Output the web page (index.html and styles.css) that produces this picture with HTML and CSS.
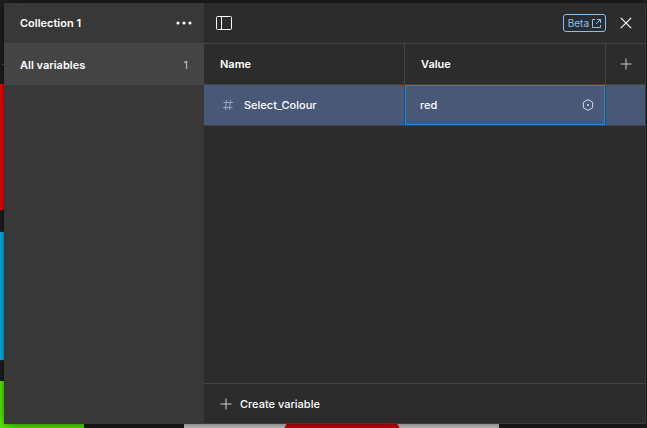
FILE: index.html
```html
<!DOCTYPE html>
<html lang="en">
<head>
<meta charset="utf-8">
<title>Variables</title>
<link rel="stylesheet" href="styles.css">
</head>
<body>
<div class="canvas" aria-hidden="true">
  <span class="shape shape-line"></span>
  <span class="shape shape-red"></span>
  <span class="shape shape-blue"></span>
  <span class="shape shape-green"></span>
  <span class="shape shape-frame"></span>
  <span class="shape shape-button"></span>
</div>
<section class="dialog">
  <aside class="sidebar">
    <header class="collection">
      <button class="collection-name" type="button">Collection 1</button>
      <button class="icon-button" type="button" aria-label="Collection options">
        <svg width="16" height="4" viewBox="0 0 16 4" fill="#fff"><circle cx="2" cy="2" r="1.6"/><circle cx="8" cy="2" r="1.6"/><circle cx="14" cy="2" r="1.6"/></svg>
      </button>
    </header>
    <a class="group" href="#all"><span>All variables</span><span class="count">1</span></a>
  </aside>
  <main class="panel">
    <header class="toolbar">
      <button class="icon-button" type="button" aria-label="Toggle sidebar">
        <svg width="16" height="14" viewBox="0 0 16 14" fill="none" stroke="#fff"><rect x=".5" y=".5" width="15" height="13" rx="1"/><path d="M5.500 1v12"/></svg>
      </button>
      <div class="actions">
        <a class="beta" href="#beta">Beta
          <svg width="9" height="9" viewBox="0 0 9 9" fill="none" stroke="currentColor"><path d="M3 .5H.5v8h8V6M5 .5h3.500V4M8.500 .5 4 5"/></svg>
        </a>
        <button class="icon-button" type="button" aria-label="Close">
          <svg width="12" height="12" viewBox="0 0 12 12" fill="none" stroke="#fff" stroke-width="1.100"><path d="m.8.8 10.400 10.400M11.200.8.8 11.200"/></svg>
        </button>
      </div>
    </header>
    <table class="variables">
      <colgroup><col><col><col class="col-add"></colgroup>
      <thead>
        <tr>
          <th scope="col">Name</th>
          <th scope="col">Value</th>
          <th class="add">
            <button class="icon-button" type="button" aria-label="Add mode">
              <svg width="12" height="12" viewBox="0 0 12 12" fill="none" stroke="#c8c8c8"><path d="M6 .5v11M.5 6h11"/></svg>
            </button>
          </th>
        </tr>
      </thead>
      <tbody>
        <tr>
          <td>
            <div class="name">
              <svg width="10" height="10" viewBox="0 0 10 10" fill="none" stroke="#9ba4b8"><path d="M3.500 0 2.500 10M7.500 0l-1 10M.5 2.500H10M0 7.500h9.500"/></svg>
              <span>Select_Colour</span>
            </div>
          </td>
          <td class="value-cell">
            <div class="value">
              <input type="text" value="red" aria-label="Value of Select_Colour">
              <button class="icon-button" type="button" aria-label="Link variable">
                <svg width="12" height="12" viewBox="0 0 12 12" fill="none" stroke="#d5d9e2"><path d="M6 .6 10.600 3.200v5.600L6 11.400 1.400 8.800V3.200z" stroke-linejoin="round"/><circle cx="6" cy="6" r="1" fill="#e5e8ee" stroke="none"/></svg>
              </button>
            </div>
          </td>
          <td></td>
        </tr>
      </tbody>
    </table>
    <footer class="footer">
      <button class="create" type="button">
        <svg width="12" height="12" viewBox="0 0 12 12" fill="none" stroke="#d0d0d0"><path d="M6 .5v11M.5 6h11"/></svg>
        Create variable
      </button>
    </footer>
  </main>
</section>
</body>
</html>
```
FILE: styles.css
```css
* {
  box-sizing: border-box;
}

body {
  margin: 0;
  min-height: 100vh;
  padding: 3px 1px 4px 4px;
  display: flex;
  overflow: hidden;
  background: #1e1e1e;
  color: #fff;
  font: 500 11px/16px Inter, "Liberation Sans", sans-serif;
}

button,
input {
  margin: 0;
  padding: 0;
  border: 0;
  background: none;
  color: inherit;
  font: inherit;
}

a {
  color: inherit;
  text-decoration: none;
}

svg {
  display: block;
  flex: none;
}

.icon-button {
  display: flex;
}

.canvas {
  position: absolute;
  inset: 0;
  overflow: hidden;
}

.shape {
  position: absolute;
}

.shape-line {
  left: 2px;
  top: 64px;
  width: 20px;
  height: 1px;
  background: #5c3a94;
}

.shape-red {
  left: -40px;
  top: 84px;
  width: 124px;
  height: 126px;
  background: #ff0000;
}

.shape-blue {
  left: -60px;
  top: 232px;
  width: 128px;
  height: 128px;
  border-radius: 64px / 4px;
  background: #00b8f5;
}

.shape-green {
  left: -40px;
  top: 381px;
  width: 124px;
  height: 126px;
  background: #5cf500;
}

.shape-frame {
  left: 184px;
  top: 300px;
  width: 315px;
  height: 200px;
  background: #d9d9d9;
}

.shape-button {
  left: 284px;
  top: 421px;
  width: 116px;
  height: 40px;
  border-radius: 10px;
  background: #e60000;
}

.dialog {
  position: relative;
  flex: 1;
  display: flex;
  background: #2c2c2c;
  box-shadow: 0 2px 14px rgb(0 0 0 / 50%), 0 0 1px rgb(0 0 0 / 40%);
}

.dialog::after {
  content: "";
  position: absolute;
  inset: 0;
  border: solid #3b3b3b;
  border-width: 0 1px 1px 0;
  border-radius: 0 0 2px;
  pointer-events: none;
}

.sidebar {
  flex: 0 0 200px;
  background: #383838;
}

.collection,
.group,
.toolbar {
  display: flex;
  align-items: center;
  justify-content: space-between;
}

.collection {
  height: 40px;
  padding: 0 12px 0 16px;
}

.collection-name,
.group,
th {
  font-weight: 600;
}

.group {
  height: 42px;
  padding: 2px 16px 0;
  background: #444;
}

.count {
  color: #c4c4c4;
  font-weight: 400;
}

.panel {
  flex: 1;
  min-width: 0;
  display: flex;
  flex-direction: column;
}

.toolbar {
  height: 41px;
  padding: 0 14px 0 12px;
  border-bottom: 1px solid #444;
}

.actions {
  display: flex;
  align-items: center;
  gap: 14px;
}

.beta {
  display: flex;
  align-items: center;
  gap: 3px;
  height: 18px;
  padding: 0 4px;
  border: 1px solid #7cc4f8;
  border-radius: 3px;
  color: #7cc4f8;
  font-size: 10px;
  font-weight: 400;
}

.variables {
  width: 100%;
  table-layout: fixed;
  border-collapse: separate;
  border-spacing: 0;
}

.col-add {
  width: 40px;
}

th,
td {
  height: 41px;
  padding: 0 16px;
  border-right: 1px solid #444;
  border-bottom: 1px solid #444;
  text-align: left;
  vertical-align: middle;
}

th:last-child,
td:last-child {
  border-right: 0;
}

.add {
  padding: 0 14px;
}

td {
  background: #4a5878;
  background-clip: padding-box;
}

.name {
  display: flex;
  align-items: center;
  gap: 11px;
  padding-left: 3px;
}

.value-cell {
  padding: 0;
}

.value {
  display: flex;
  align-items: center;
  justify-content: space-between;
  height: 40px;
  padding: 0 10px 0 14px;
  border: 1px solid #0c8ce9;
}

.value input {
  flex: 1;
  min-width: 0;
  outline: 0;
}

.footer {
  display: flex;
  align-items: center;
  height: 41px;
  margin-top: auto;
  padding: 0 16px;
  border-top: 1px solid #444;
}

.create {
  display: flex;
  align-items: center;
  gap: 8px;
}
```
